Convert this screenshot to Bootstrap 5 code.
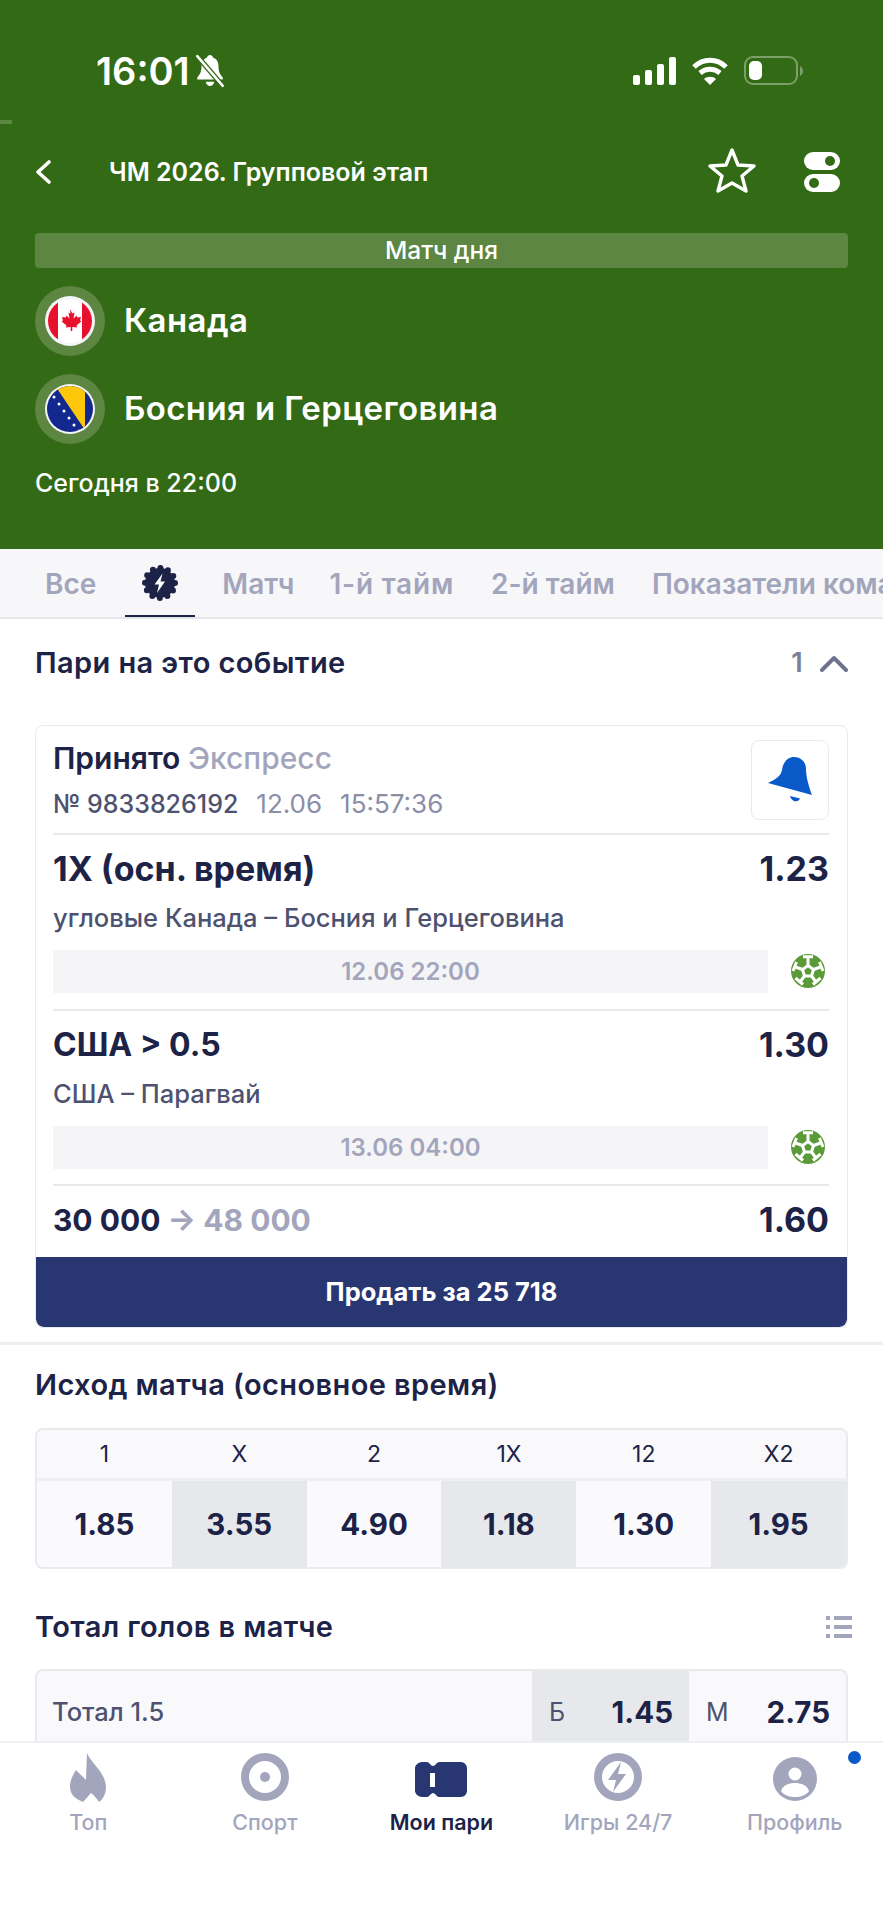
<!DOCTYPE html>
<html lang="ru">
<head>
  <meta charset="UTF-8" />
  <meta name="viewport" content="width=device-width, initial-scale=1.0"/>
  <title>Канада – Босния и Герцеговина</title>
  <link href="https://cdn.jsdelivr.net/npm/bootstrap@5.3.2/dist/css/bootstrap.min.css" rel="stylesheet">
  <style>
    body {
      font-family: Inter, "Noto Sans", sans-serif;
      color: #1c2347;
      background: #fff;
      height: 1920px;
      overflow: hidden;
    }

    /* green match header */
    .match-head {
      position: relative;
      height: 549px;
      background: #336a15;
      color: #fff;
      padding: 48px 35px 0;
    }
    .edge-mark {
      position: absolute;
      left: 0;
      top: 120px;
      width: 12px;
      height: 4px;
      background: #5c8642;
    }
    .status-line {
      height: 46px;
      padding: 0 44px 0 61px;
    }
    .status-time { font-size: 38px; font-weight: 600; line-height: 46px; }
    .title-line { height: 52px; margin-top: 52px; }
    .title-text { font-size: 25px; font-weight: 600; margin-left: 57px; line-height: 52px; }
    .day-banner {
      height: 35px;
      margin-top: 35px;
      background: #5c8642;
      border-radius: 4px;
      font-size: 24.500px;
      font-weight: 500;
      line-height: 35px;
      text-align: center;
    }
    .team-line { height: 70px; margin-top: 18px; gap: 19px; }
    .team-ring {
      width: 70px;
      height: 70px;
      border-radius: 50%;
      background: #5c8642;
    }
    .team-name { font-size: 33px; font-weight: 600; letter-spacing: .4px; }
    .start-time { font-size: 25px; font-weight: 500; margin-top: 21px; line-height: 36px; }

    /* market tabs */
    .tab-strip {
      height: 70px;
      background: #f7f7f9;
      border-bottom: 2px solid #e6e7eb;
      padding-left: 45px;
      white-space: nowrap;
      overflow: hidden;
      color: #a3a5bd;
      font-size: 28px;
      font-weight: 600;
    }
    .tab-item { margin-right: 37px; line-height: 70px; }
    .tab-short { margin-right: 35px; }
    .tab-half { letter-spacing: .8px; }
    .tab-active {
      position: relative;
      flex: 0 0 70px;
      margin: 0 27px 0 -8px;
      height: 70px;
    }
    .tab-active::after {
      content: "";
      position: absolute;
      left: 0;
      right: 0;
      bottom: 0;
      height: 4px;
      background: #1c2347;
    }

    .section-head { padding: 0 35px; font-size: 29px; font-weight: 600; letter-spacing: .4px; }
    .bets-head { height: 88px; }
    .bets-count { color: #7b7f99; font-size: 27px; margin-right: 17px; }

    /* placed bet */
    .bet-card {
      margin: 18px 35px 0;
      height: 603px;
      border: 1px solid #e9eaee;
      border-radius: 8px;
      overflow: hidden;
    }
    .bet-top { height: 107px; padding: 14px 18px 0 17px; }
    .bet-state { font-size: 30px; font-weight: 600; line-height: 36px; }
    .bet-kind { color: #a3a5bd; font-weight: 500; }
    .bet-meta { font-size: 25px; color: #4d5270; font-weight: 500; line-height: 30px; margin-top: 13px; }
    .bet-meta span { color: #8b8ea6; font-weight: 400; font-size: 26px; margin-left: 18px; }
    .bell-box {
      width: 78px;
      height: 80px;
      border: 1px solid #e9eaee;
      border-radius: 8px;
    }
    .leg { margin: 0 18px 0 17px; border-top: 2px solid #e9eaee; height: 176px; padding-top: 14px; }
    .leg-title { font-size: 32px; font-weight: 700; line-height: 40px; }
    .leg-long { font-size: 34px; }
    .leg-odd { font-size: 34px; }
    .leg-sub { font-size: 25.500px; color: #4d5270; font-weight: 500; line-height: 30px; margin-top: 14px; }
    .leg-date {
      width: 715px;
      height: 43px;
      background: #f5f5f8;
      color: #a3a5bd;
      font-size: 24px;
      font-weight: 600;
      line-height: 43px;
      text-align: center;
    }
    .leg-foot { margin-top: 17px; }
    .sum-line { margin: 0 18px 0 17px; border-top: 2px solid #e9eaee; height: 73px; padding-top: 14px; }
    .sum-amount { font-size: 30px; }
    .sum-next { color: #a3a5bd; }
    .sell-btn {
      height: 70px;
      width: 100%;
      background: #283671;
      color: #fff;
      border: 0;
      border-radius: 0 0 8px 8px;
      font-size: 25.500px;
      font-weight: 700;
    }

    .block-gap { height: 3px; background: #eeeff2; margin-top: 14px; }

    /* odds grid */
    .outcome-head { height: 83px; padding-top: 22px; line-height: 36px; }
    .odds-box {
      margin: 0 35px;
      height: 141px;
      border: 2px solid #e9eaee;
      border-radius: 8px;
      overflow: hidden;
      background: #fafafc;
    }
    .odds-names { height: 51px; background: #f9f9fc; border-bottom: 3px solid #eeeff2; }
    .odds-names > div { font-size: 23px; line-height: 48px; text-align: center; }
    .odds-cell { height: 88px; font-size: 29.500px; font-weight: 700; line-height: 86px; text-align: center; background: #fafafc; }
    .odds-alt { background: #e7e8ec; }

    .total-head { height: 100px; padding-top: 16px; }
    .list-icon { margin-right: -4px; }
    .total-box {
      margin: 0 35px;
      height: 110px;
      border: 2px solid #e9eaee;
      border-radius: 8px;
      background: #f9f9fc;
      overflow: hidden;
    }
    .total-name { flex: 1; padding-left: 15px; font-size: 25.500px; color: #4d5270; font-weight: 500; padding-top: 22px; }
    .total-pick {
      width: 157px;
      padding: 23px 16px 0 17px;
      font-size: 29.500px;
      font-weight: 700;
      line-height: 36px;
    }
    .total-pick span { font-size: 25px; font-weight: 400; color: #4d5270; }

    /* bottom tabs */
    .bottom-tabs {
      height: 179px;
      background: #fff;
      border-top: 2px solid #eeeff2;
    }
    .bottom-item {
      position: relative;
      width: 20%;
      height: 76px;
      margin-top: 10px;
      text-align: center;
      color: #a3a5bd;
      font-size: 21.500px;
      font-weight: 500;
    }
    .bottom-icon { height: 52px; }
    .bottom-label { line-height: 28px; margin-top: 3px; }
    .bottom-current { color: #1c2347; font-weight: 600; }
    .notice-dot {
      position: absolute;
      top: -2px;
      right: 22px;
      width: 13px;
      height: 13px;
      border-radius: 50%;
      background: #0a59c9;
    }
  </style>
</head>
<body>
  <!-- Match header -->
  <header class="match-head">
    <div class="edge-mark"></div>
    <div class="status-line d-flex align-items-center justify-content-between">
      <div class="d-flex align-items-center gap-1">
        <span class="status-time">16:01</span>
        <svg width="32" height="34" viewBox="0 0 30 32" fill="#fff">
          <path d="M15 1c1.500 0 2.500 1 2.800 2.200C22 4.600 23 8 23 12c0 5 2 8 4 10v2H3v-2c2-2 4-5 4-10 0-4 1.500-7.400 5.200-8.800C12.500 2 13.500 1 15 1z"/>
          <path d="M11 26h8c-.3 2.500-2 4-4 4s-3.700-1.500-4-4z"/>
          <path d="M3 2l24 28" stroke="#336a15" stroke-width="5"/>
          <path d="M3 2l24 28" stroke="#fff" stroke-width="2.400" stroke-linecap="round"/>
        </svg>
      </div>
      <div class="d-flex align-items-center">
        <svg width="43" height="28" viewBox="0 0 43 28" fill="#fff">
          <rect x="0" y="18" width="7" height="10" rx="2"/>
          <rect x="12" y="13" width="7" height="15" rx="2"/>
          <rect x="24" y="7" width="7" height="21" rx="2"/>
          <rect x="36" y="0" width="7" height="28" rx="2"/>
        </svg>
        <svg class="ms-3" width="36" height="29" viewBox="0 0 36 29" fill="none" stroke="#fff" stroke-width="5">
          <path d="M2 10c9-9 23-9 32 0"/>
          <path d="M8 16c6-5 14-5 20 0"/>
          <path d="M18 28l-6-6c3-3 9-3 12 0z" fill="#fff" stroke="none"/>
        </svg>
        <svg class="ms-3" width="60" height="30" viewBox="0 0 60 30" fill="none">
          <rect x="1" y="1" width="52" height="27" rx="8" stroke="#7da068" stroke-width="2"/>
          <rect x="5" y="5" width="13" height="19" rx="5" fill="#fff"/>
          <path d="M56 10c2 1 3 3 3 5s-1 4-3 5z" fill="#7da068"/>
        </svg>
      </div>
    </div>

    <div class="title-line d-flex align-items-center justify-content-between">
      <div class="d-flex align-items-center">
        <svg width="17" height="24" viewBox="0 0 17 24" fill="none" stroke="#fff" stroke-width="3.600" stroke-linecap="round" stroke-linejoin="round">
          <path d="M14 2L3 12l11 10"/>
        </svg>
        <span class="title-text">ЧМ 2026. Групповой этап</span>
      </div>
      <div class="d-flex align-items-center">
        <svg class="mb-1" width="48" height="46" viewBox="0 0 48 46" fill="none" stroke="#fff" stroke-width="3.400" stroke-linejoin="round">
          <path d="M24 3l6 15 16 1-12 10 4 15-14-8-14 8 4-15L2 19l16-1z"/>
        </svg>
        <svg class="ms-5 me-2" width="36" height="40" viewBox="0 0 36 40">
          <rect x="0" y="0" width="36" height="18" rx="9" fill="#fff"/>
          <circle cx="26" cy="9" r="5" fill="#336a15"/>
          <rect x="0" y="22" width="36" height="18" rx="9" fill="#fff"/>
          <circle cx="10" cy="31" r="5" fill="#336a15"/>
        </svg>
      </div>
    </div>

    <div class="day-banner">Матч дня</div>

    <div class="team-line d-flex align-items-center">
      <div class="team-ring d-flex align-items-center justify-content-center">
        <svg width="50" height="50" viewBox="0 0 50 50">
          <clipPath id="flagClipA"><circle cx="25" cy="25" r="22"/></clipPath>
          <circle cx="25" cy="25" r="25" fill="#f4f5f7"/>
          <g clip-path="url(#flagClipA)">
            <rect x="0" y="0" width="50" height="50" fill="#fff"/>
            <rect x="0" y="0" width="13" height="50" fill="#e8112d"/>
            <rect x="37" y="0" width="13" height="50" fill="#e8112d"/>
            <path d="M25 13l2.500 4.500 2-1-1 6 3-3 .8 2 3.700-.5-1 3.500 1.500.8-5 4.200.6 2-4.800-.6v4h-1.600v-4l-4.800.6.600-2-5-4.200 1.500-.8-1-3.500 3.700.5.800-2 3 3-1-6 2 1z" fill="#e8112d"/>
          </g>
        </svg>
      </div>
      <div class="team-name">Канада</div>
    </div>

    <div class="team-line d-flex align-items-center">
      <div class="team-ring d-flex align-items-center justify-content-center">
        <svg width="50" height="50" viewBox="0 0 50 50">
          <clipPath id="flagClipB"><circle cx="25" cy="25" r="23"/></clipPath>
          <circle cx="25" cy="25" r="25" fill="#f4f5f7"/>
          <g clip-path="url(#flagClipB)">
            <rect x="0" y="0" width="50" height="50" fill="#12288f"/>
            <path d="M9 0h31v46z" fill="#fdc70c"/>
            <g fill="#fff">
              <circle cx="9" cy="13" r="1.500"/>
              <circle cx="14" cy="20" r="1.500"/>
              <circle cx="19" cy="27" r="1.500"/>
              <circle cx="24" cy="34" r="1.500"/>
              <circle cx="29" cy="41" r="1.500"/>
              <circle cx="34" cy="47" r="1.500"/>
            </g>
          </g>
        </svg>
      </div>
      <div class="team-name">Босния и Герцеговина</div>
    </div>

    <div class="start-time">Сегодня в 22:00</div>
  </header>

  <!-- Market tabs -->
  <div class="tab-strip d-flex align-items-start">
    <span class="tab-item">Все</span>
    <span class="tab-active d-flex justify-content-center pt-3">
      <svg width="36" height="36" viewBox="0 0 36 36">
        <circle cx="18" cy="18" r="15" fill="#1c2347"/>
        <circle cx="18" cy="18" r="15" fill="none" stroke="#1c2347" stroke-width="6" stroke-linecap="round" stroke-dasharray="0 7.854"/>
        <path d="M20.500 8.500l-8 11h4.500L15 28l8-11.500h-4.500z" fill="#fff"/>
      </svg>
    </span>
    <span class="tab-item tab-short">Матч</span>
    <span class="tab-item tab-half">1-й тайм</span>
    <span class="tab-item">2-й тайм</span>
    <span class="tab-item">Показатели команд</span>
  </div>

  <!-- Bets on this event -->
  <div class="section-head bets-head d-flex align-items-center justify-content-between">
    <span>Пари на это событие</span>
    <span class="d-flex align-items-center">
      <span class="bets-count">1</span>
      <svg width="28" height="17" viewBox="0 0 28 17" fill="none" stroke="#6f7390" stroke-width="4" stroke-linecap="round" stroke-linejoin="round">
        <path d="M2 15L14 3l12 12"/>
      </svg>
    </span>
  </div>

  <div class="card bet-card">
    <div class="bet-top d-flex justify-content-between">
      <div>
        <div class="bet-state">Принято <span class="bet-kind">Экспресс</span></div>
        <div class="bet-meta">№ 9833826192<span>12.06</span><span>15:57:36</span></div>
      </div>
      <div class="bell-box d-flex align-items-center justify-content-center">
        <svg width="44" height="46" viewBox="0 0 44 46" fill="#0a59c9">
          <path d="M0 26C8 22 13 19 14 13 15 5 20 0 26 0c7 0 12 5 12 12 0 8 3 18 6 26z"/>
          <path d="M22 39l10 2.500c-1 3.500-8 4.500-10-2.500z"/>
        </svg>
      </div>
    </div>

    <div class="leg">
      <div class="leg-title d-flex justify-content-between"><span class="leg-long">1X (осн. время)</span><span class="leg-odd">1.23</span></div>
      <div class="leg-sub">угловые Канада – Босния и Герцеговина</div>
      <div class="leg-foot d-flex align-items-center justify-content-between">
        <div class="leg-date">12.06 22:00</div>
        <svg class="me-1" width="34" height="34" viewBox="0 0 34 34">
          <use href="#soccerBall"/>
        </svg>
      </div>
    </div>

    <div class="leg">
      <div class="leg-title d-flex justify-content-between"><span>США &gt; 0.5</span><span class="leg-odd">1.30</span></div>
      <div class="leg-sub">США – Парагвай</div>
      <div class="leg-foot d-flex align-items-center justify-content-between">
        <div class="leg-date">13.06 04:00</div>
        <svg class="me-1" width="34" height="34" viewBox="0 0 34 34">
          <use href="#soccerBall"/>
        </svg>
      </div>
    </div>

    <div class="sum-line leg-title d-flex justify-content-between">
      <span class="sum-amount">30 000 <span class="sum-next">→ 48 000</span></span><span class="leg-odd">1.60</span>
    </div>

    <button class="btn sell-btn" type="button">Продать за 25 718</button>
  </div>

  <div class="block-gap"></div>

  <!-- Match result -->
  <div class="section-head outcome-head">Исход матча (основное время)</div>
  <div class="odds-box">
    <div class="row g-0 odds-names">
      <div class="col-2">1</div>
      <div class="col-2">X</div>
      <div class="col-2">2</div>
      <div class="col-2">1X</div>
      <div class="col-2">12</div>
      <div class="col-2">X2</div>
    </div>
    <div class="row g-0">
      <div class="col-2 odds-cell">1.85</div>
      <div class="col-2 odds-cell odds-alt">3.55</div>
      <div class="col-2 odds-cell">4.90</div>
      <div class="col-2 odds-cell odds-alt">1.18</div>
      <div class="col-2 odds-cell">1.30</div>
      <div class="col-2 odds-cell odds-alt">1.95</div>
    </div>
  </div>

  <!-- Total goals -->
  <div class="section-head total-head d-flex align-items-center justify-content-between">
    <span>Тотал голов в матче</span>
    <svg class="list-icon" width="26" height="22" viewBox="0 0 26 22" fill="#a3a5bd">
      <rect x="0" y="0" width="4" height="4"/><rect x="8" y="0" width="18" height="4"/>
      <rect x="0" y="9" width="4" height="4"/><rect x="8" y="9" width="18" height="4"/>
      <rect x="0" y="18" width="4" height="4"/><rect x="8" y="18" width="18" height="4"/>
    </svg>
  </div>
  <div class="total-box d-flex">
    <div class="total-name">Тотал 1.5</div>
    <div class="total-pick odds-alt d-flex justify-content-between"><span>Б</span>1.45</div>
    <div class="total-pick d-flex justify-content-between"><span>М</span>2.75</div>
  </div>

  <!-- Bottom navigation -->
  <nav class="bottom-tabs fixed-bottom d-flex align-items-start">
    <div class="bottom-item">
      <div class="bottom-icon">
        <svg width="36" height="50" viewBox="0 0 36 50" fill="#a3a5bd">
          <path d="M17 0C21 10 36 20 36 34 36 42 32 47 29 49 27 46 24 42 21 40 19 42 16 46 13 49 6 46 0 42 0 34 0 27 3 22 6 17 9 20 13 24 16 27z"/>
        </svg>
      </div>
      <div class="bottom-label">Топ</div>
    </div>
    <div class="bottom-item">
      <div class="bottom-icon">
        <svg width="48" height="48" viewBox="0 0 48 48" fill="none">
          <circle cx="24" cy="24" r="20" stroke="#a3a5bd" stroke-width="8"/>
          <circle cx="24" cy="24" r="5" fill="#a3a5bd"/>
        </svg>
      </div>
      <div class="bottom-label">Спорт</div>
    </div>
    <div class="bottom-item bottom-current">
      <div class="bottom-icon d-flex align-items-center justify-content-center">
        <svg width="52" height="35" viewBox="0 0 52 35" fill="#283671">
          <path d="M7 0h5c2 0 4 4 6 4s4-4 6-4h22c3 0 6 3 6 6v23c0 3-3 6-6 6H24c-2 0-4-4-6-4s-4 4-6 4H7c-3 0-7-3-7-6V6c0-3 4-6 7-6z"/>
          <rect x="15" y="11" width="5" height="14" fill="#fff"/>
        </svg>
      </div>
      <div class="bottom-label">Мои пари</div>
    </div>
    <div class="bottom-item">
      <div class="bottom-icon">
        <svg width="48" height="48" viewBox="0 0 48 48" fill="none">
          <circle cx="24" cy="24" r="20" stroke="#a3a5bd" stroke-width="8"/>
          <path d="M27 9L14 27h8l-3 12 13-18h-8z" fill="#a3a5bd"/>
        </svg>
      </div>
      <div class="bottom-label">Игры 24/7</div>
    </div>
    <div class="bottom-item">
      <span class="notice-dot"></span>
      <div class="bottom-icon">
        <svg width="44" height="44" viewBox="0 0 44 44" class="mt-1">
          <circle cx="22" cy="22" r="22" fill="#a3a5bd"/>
          <circle cx="22" cy="17" r="6.500" fill="#fff"/>
          <path d="M8 34c2-6 8-8 14-8s12 2 14 8c-3 4-8 6-14 6s-11-2-14-6z" fill="#fff"/>
        </svg>
      </div>
      <div class="bottom-label">Профиль</div>
    </div>
  </nav>

  <!-- shared ball icon -->
  <svg width="0" height="0" class="d-block">
    <defs>
      <g id="soccerBall">
        <circle cx="17" cy="17" r="17" fill="#5a9a37"/>
        <g stroke="#fff" stroke-width="3" fill="none">
          <path d="M17 11.500l5.500 4-2 6.500h-7l-2-6.500z"/>
          <path d="M17 11.500V4M12 2.800h10M22.500 15.500l7-2.500M28.500 8l3.500 9M20.500 22l4.500 6M29.500 24l-7.500 6.500M13.500 22l-4.500 6M4.500 24l7.500 6.500M11.500 15.500l-7-2.500M5.500 8L2 17"/>
        </g>
      </g>
    </defs>
  </svg>

  <script src="https://cdn.jsdelivr.net/npm/bootstrap@5.3.2/dist/js/bootstrap.bundle.min.js"></script>
</body>
</html>
